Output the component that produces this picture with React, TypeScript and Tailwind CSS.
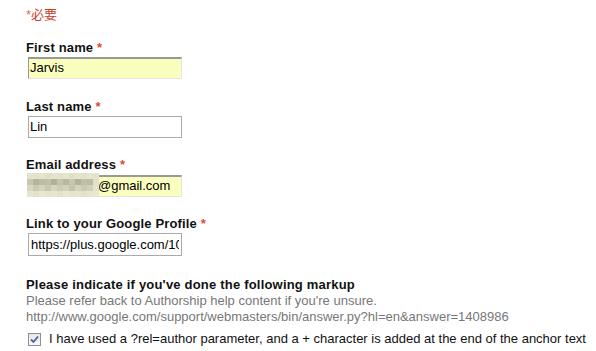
import React from "react";

const mosaic = [
  ["#e4e4cc", "#e2e2ca", "#e6e6ce", "#e0e0c6", "#e4e4cc", "#e2e2c8", "#e6e6cc", "#e0e0c8", "#e4e4ca", "#e2e2ca", "#e6e6ce", "#e4e4cc"],
  ["#c8c8b0", "#b4b49c", "#bcbca4", "#c0c0a6", "#b0b098", "#c4c4aa", "#b8b8a0", "#c6c6ac", "#b2b29a", "#c0c0a8", "#bcbca2", "#e0e0c8"],
  ["#d8d8c0", "#cacab0", "#d4d4bc", "#c8c8ae", "#d6d6be", "#cccdb2", "#d2d2ba", "#c4c4aa", "#d4d4bc", "#cacab0", "#d0d0b8", "#e4e4cc"],
  ["#e6e6d0", "#e2e2ca", "#e8e8d2", "#e4e4cc", "#e6e6ce", "#e2e2ca", "#e8e8d0", "#e4e4cc", "#e6e6ce", "#e2e2ca", "#e6e6ce", "#e8e8d0"],
];

function Label({ text }: { text: string }) {
  return (
    <div className="font-bold text-[13px] leading-[15px] tracking-[0.15px] text-[#111]">
      {text} <span className="text-[#dd4b39]">*</span>
    </div>
  );
}

export default function App() {
  return (
    <div
      className="w-[596px] h-[351px] bg-white pl-[26px] pt-[7px] overflow-hidden"
      style={{ fontFamily: '"Liberation Sans", Arial, "Noto Sans CJK SC", sans-serif' }}
    >
      <div className="text-[13px] leading-[15px] text-[#cc3d1f]">
        <span className="text-[#e06666]">*</span>必要
      </div>

      <div className="mt-[18px]">
        <Label text="First name" />
        <div className="mt-[2px] ml-[2px] w-[154px] h-[22px] bg-[#faffbd] border-t-2 border-l border-r border-b border-t-[#999] border-l-[#999] border-r-[#e4e4e4] border-b-[#e4e4e4] text-[13px] leading-[18px] pl-[1px] text-black">
          Jarvis
        </div>
      </div>

      <div className="mt-[20px]">
        <Label text="Last name" />
        <div className="mt-[2px] ml-[2px] w-[154px] h-[22px] bg-white border border-[#aaa] text-[13px] leading-[20px] pl-[1px] text-black">
          Lin
        </div>
      </div>

      <div className="mt-[19px]">
        <Label text="Email address" />
        <div className="relative mt-[3px] ml-[2px] w-[154px] h-[22px] bg-[#faffbd] border-t-2 border-l border-r border-b border-t-[#999] border-l-[#999] border-r-[#e4e4e4] border-b-[#e4e4e4] text-[13px] leading-[18px] text-black">
          <span className="absolute left-[69px] top-0">@gmail.com</span>
          <div className="absolute -left-[2px] -top-[4px] grid grid-cols-12 w-[72px] h-[24px]">
            {mosaic.flat().map((c, i) => (
              <div key={i} style={{ backgroundColor: c }} />
            ))}
          </div>
        </div>
      </div>

      <div className="mt-[19px]">
        <Label text="Link to your Google Profile" />
        <div className="mt-[2px] ml-[2px] w-[154px] h-[23px] bg-white border border-[#aaa] text-[13px] leading-[21px] pl-[2px] text-black">
          <div className="w-[148px] overflow-hidden whitespace-nowrap">https://plus.google.com/10</div>
        </div>
      </div>

      <div className="mt-[21px] font-bold text-[13px] leading-[16px] tracking-[0.2px] text-[#111]">
        Please indicate if you've done the following markup
      </div>
      <div className="text-[13px] leading-[16px] text-[#777]">
        Please refer back to Authorship help content if you're unsure.
      </div>
      <div className="text-[13px] leading-[16px] text-[#777]">
        http://www.google.com/support/webmasters/bin/answer.py?hl=en&amp;answer=1408986
      </div>
      <div className="mt-[6px] flex items-center ml-[2px]">
        <div className="w-[13px] h-[13px] border border-[#8e8f8f] bg-gradient-to-b from-[#e8e8ec] to-[#f8f8fa] flex items-center justify-center">
          <svg width="9" height="9" viewBox="0 0 9 9">
            <path d="M1 4.5 L3.5 7 L8 1.5" fill="none" stroke="#4a5fa6" strokeWidth="1.8" />
          </svg>
        </div>
        <span className="ml-[8px] text-[13px] leading-[16px] text-[#111]">
          I have used a ?rel=author parameter, and a + character is added at the end of the anchor text
        </span>
      </div>
    </div>
  );
}
